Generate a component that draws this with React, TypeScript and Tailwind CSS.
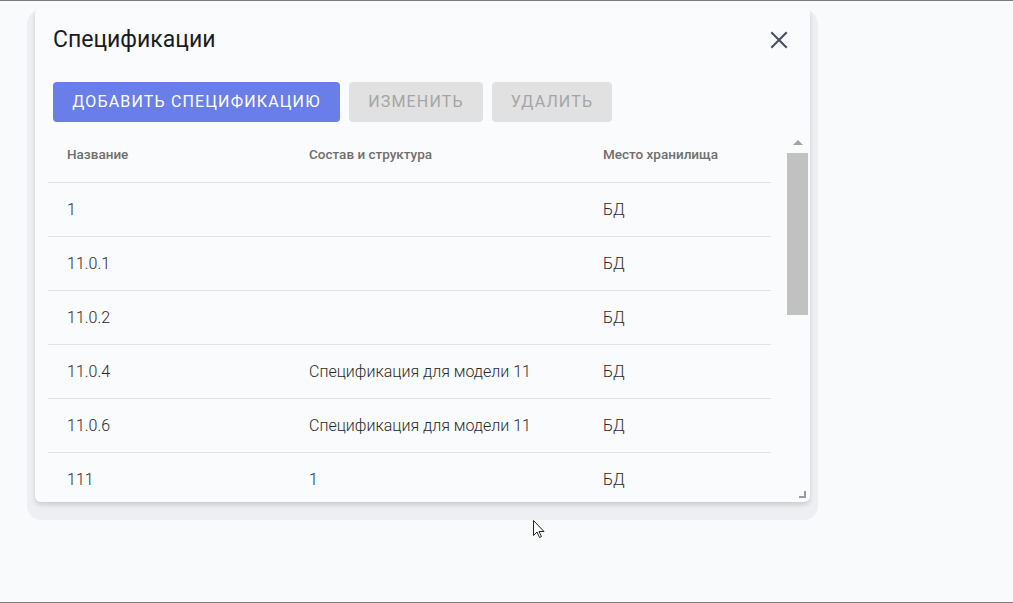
import React from "react";

const rows = [
  { name: "1", desc: "", place: "БД" },
  { name: "11.0.1", desc: "", place: "БД" },
  { name: "11.0.2", desc: "", place: "БД" },
  { name: "11.0.4", desc: "Спецификация для модели 11", place: "БД" },
  { name: "11.0.6", desc: "Спецификация для модели 11", place: "БД" },
  { name: "111", desc: "1", place: "БД" },
];

export default function App() {
  return (
    <div
      className="relative h-[603px] w-[1013px] overflow-hidden border-t border-b border-[#7b7b7b] bg-[#f9fafc]"
      style={{ fontFamily: "Roboto, 'Noto Sans', sans-serif" }}
    >
      <div className="pl-[35px] pt-[7px]">
        <div className="relative flex h-[494px] w-[775px] flex-col overflow-hidden rounded-[6px] bg-[#fafbfd] shadow-[0_3px_5px_0_rgba(0,0,0,0.14),0_10px_0_8px_#edeff3]">
          {/* header */}
          <div className="flex items-center justify-between pl-[18px] pr-[22px] pt-[18px]">
            <h2 className="text-[23px] font-normal leading-[28px] text-[#1b1b1f]">Спецификации</h2>
            <svg width="18" height="18" viewBox="0 0 18 18" className="text-[#464c5c]">
              <path d="M2 2 L16 16 M16 2 L2 16" stroke="currentColor" strokeWidth="2" strokeLinecap="square" />
            </svg>
          </div>
          {/* buttons */}
          <div className="mt-[28px] flex gap-[9px] pl-[18px]">
            <button className="h-[40px] w-[287px] rounded-[4px] bg-[#6a7ee9] text-[16px] uppercase tracking-[1.15px] text-white">
              Добавить спецификацию
            </button>
            <button className="h-[40px] w-[134px] rounded-[4px] bg-[#e1e1e1] text-[16px] uppercase tracking-[1.15px] text-[#a5a5a5]">
              Изменить
            </button>
            <button className="h-[40px] w-[120px] rounded-[4px] bg-[#e1e1e1] text-[16px] uppercase tracking-[1.15px] text-[#a5a5a5]">
              Удалить
            </button>
          </div>
          {/* table area */}
          <div className="mt-[15px] flex min-h-0 flex-1 pl-[13px]">
            <div className="w-[723px] overflow-hidden">
              <div className="flex h-[46px] border-b border-[#e2e3e5] pt-[9px] text-[13.5px] font-medium leading-[16px] text-[#6e6e6e]">
                <div className="w-[242px] pl-[19px]">Название</div>
                <div className="w-[294px] pl-[19px]">Состав и структура</div>
                <div className="flex-1 pl-[19px]">Место хранилища</div>
              </div>
              {rows.map((r, i) => (
                <div
                  key={i}
                  className="flex h-[54px] items-center border-b border-[#e2e3e5] text-[16px] font-light leading-[20px] text-[#2a2a2a]"
                >
                  <div className="w-[242px] pl-[19px]">{r.name}</div>
                  <div className="w-[294px] pl-[19px]">{r.desc}</div>
                  <div className="flex-1 pl-[19px]">{r.place}</div>
                </div>
              ))}
            </div>
            {/* scrollbar */}
            <div className="ml-[16px] flex w-[21px] flex-col items-center">
              <svg width="12" height="8" viewBox="0 0 12 8" className="mt-[1px]">
                <path d="M1 7 L6 2 L11 7 Z" fill="#a3a3a3" />
              </svg>
              <div className="mt-[7px] h-[162px] w-[21px] bg-[#c1c1c1]" />
            </div>
          </div>
          {/* resize handle */}
          <svg width="7" height="7" viewBox="0 0 7 7" className="absolute bottom-[4px] right-[4px]">
            <path d="M6 0 V6 H0" stroke="#9a9a9a" strokeWidth="2" fill="none" />
          </svg>
        </div>
      </div>
      {/* mouse cursor */}
      <svg width="13" height="19" viewBox="0 0 13 19" className="absolute left-[533px] top-[519px]">
        <path
          d="M0.5 0.5 L0.5 15.5 L4 12 L6.5 17.5 L8.5 16.5 L6 11.5 L11 11.5 Z"
          fill="#ffffff"
          stroke="#222222"
          strokeWidth="1"
        />
      </svg>
    </div>
  );
}
